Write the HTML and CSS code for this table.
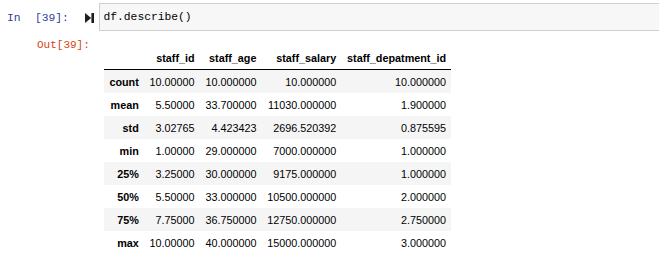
FILE: index.html
```html
<!DOCTYPE html>
<html>
<head>
<meta charset="utf-8">
<link rel="stylesheet" href="styles.css">
</head>
<body>
<div class="cell">
  <div class="input-row">
    <div class="prompt in-prompt">
      <span class="in-label">In</span><span class="in-num">[39]:</span>
      <svg class="run-icon" width="9" height="10" viewBox="0 0 9 10"><polygon points="0,0 6.2,5 0,10" fill="#1f1f1f"/><rect x="6.4" y="0" width="2.6" height="10" fill="#1f1f1f"/></svg>
    </div>
    <div class="editor">df.describe()</div>
  </div>
  <div class="output-row">
    <div class="prompt out-prompt">Out[39]:</div>
    <div class="out-area">
      <table class="dataframe">
        <thead>
          <tr><th></th><th>staff_id</th><th>staff_age</th><th>staff_salary</th><th>staff_depatment_id</th></tr>
        </thead>
        <tbody>
          <tr><th>count</th><td>10.00000</td><td>10.000000</td><td>10.000000</td><td>10.000000</td></tr>
          <tr><th>mean</th><td>5.50000</td><td>33.700000</td><td>11030.000000</td><td>1.900000</td></tr>
          <tr><th>std</th><td>3.02765</td><td>4.423423</td><td>2696.520392</td><td>0.875595</td></tr>
          <tr><th>min</th><td>1.00000</td><td>29.000000</td><td>7000.000000</td><td>1.000000</td></tr>
          <tr><th>25%</th><td>3.25000</td><td>30.000000</td><td>9175.000000</td><td>1.000000</td></tr>
          <tr><th>50%</th><td>5.50000</td><td>33.000000</td><td>10500.000000</td><td>2.000000</td></tr>
          <tr><th>75%</th><td>7.75000</td><td>36.750000</td><td>12750.000000</td><td>2.750000</td></tr>
          <tr><th>max</th><td>10.00000</td><td>40.000000</td><td>15000.000000</td><td>3.000000</td></tr>
        </tbody>
      </table>
    </div>
  </div>
</div>
</body>
</html>
```

FILE: styles.css
```css
html, body {
  margin: 0;
  padding: 0;
  background: #ffffff;
  overflow: hidden;
}
body {
  width: 659px;
  height: 254px;
}
.cell {
  padding-top: 3px;
}
.input-row {
  display: flex;
  align-items: flex-start;
}
.prompt {
  width: 99px;
  flex: 0 0 99px;
  box-sizing: border-box;
  font-family: "Liberation Mono", "DejaVu Sans Mono", monospace;
  font-size: 11.3px;
}
.in-prompt {
  display: flex;
  align-items: center;
  height: 28px;
  padding-left: 7px;
  padding-top: 1px;
  color: #303F9F;
}
.in-num {
  margin-left: 14.4px;
}
.run-icon {
  margin-left: 16px;
  margin-top: 0px;
  flex: 0 0 auto;
}
.editor {
  flex: 1 0 auto;
  margin-right: -20px;
  height: 28px;
  box-sizing: border-box;
  border: 1px solid #cfcfcf;
  background: #f7f7f7;
  padding-left: 3.5px;
  font-family: "Liberation Mono", "DejaVu Sans Mono", monospace;
  font-size: 11.3px;
  line-height: 26px;
  color: #000;
}
.output-row {
  display: flex;
  align-items: flex-start;
}
.out-prompt {
  color: #D84315;
  padding-left: 37px;
  padding-top: 7px;
  line-height: 14px;
  font-size: 11px;
}
.out-area {
  padding-left: 5px;
  padding-top: 15px;
}
.dataframe {
  border-collapse: collapse;
  border-spacing: 0;
  border: none;
  font-family: "Liberation Sans", Arial, sans-serif;
  font-size: 10.8px;
  color: #000;
}
.dataframe thead {
  border-bottom: 1px solid #000;
}
.dataframe th,
.dataframe td {
  text-align: right;
  vertical-align: middle;
  padding: 4.5px 5.4px;
  line-height: 14px;
  white-space: nowrap;
  border: none;
}
.dataframe th {
  font-weight: bold;
}
.dataframe td {
  font-weight: normal;
}
.dataframe tbody tr:nth-child(odd) {
  background: #f5f5f5;
}
```
